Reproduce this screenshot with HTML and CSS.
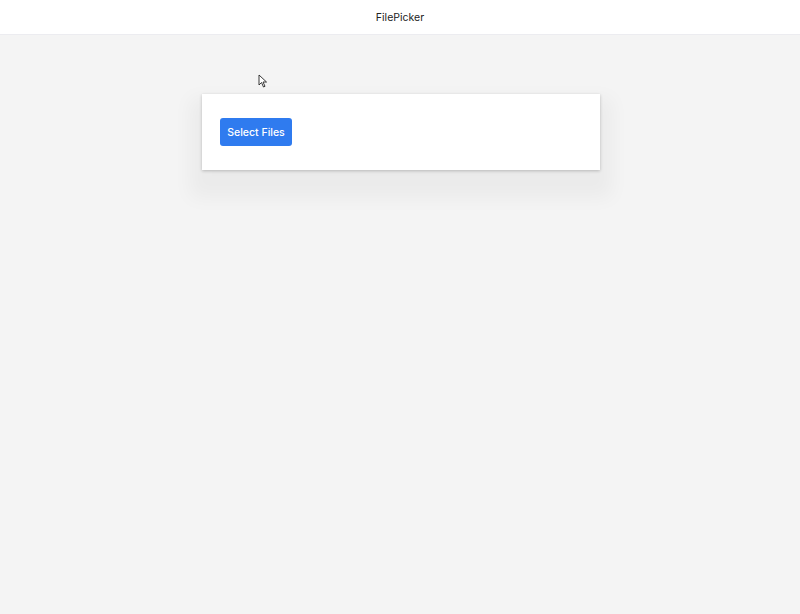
FILE: index.html
```html
<!DOCTYPE html>
<html>
<head>
<meta charset="utf-8">
<link rel="stylesheet" href="styles.css">
</head>
<body>
<header class="topbar">FilePicker</header>
<main class="content">
  <section class="card">
    <button class="btn">Select Files</button>
  </section>
</main>
<svg class="cursor" width="10" height="14" viewBox="0 0 10 14"><path d="M1 1 L1 11 L3.5 8.5 L5.5 13 L7 12.3 L5 8 L8.5 8 Z" fill="#fff" stroke="#222" stroke-width="0.9" stroke-linejoin="round"/></svg>
</body>
</html>
```

FILE: styles.css
```css
html, body {
  margin: 0;
  padding: 0;
  height: 100%;
}
body {
  background: #f4f4f4;
  font-family: "Inter", "Liberation Sans", sans-serif;
  position: relative;
}
.topbar {
  height: 35px;
  background: #fff;
  border-bottom: 1px solid #ececf0;
  display: flex;
  align-items: center;
  justify-content: center;
  font-size: 10.5px;
  color: #222;
  box-sizing: border-box;
}
.content {
  display: flex;
  justify-content: center;
  padding-top: 59px;
}
.card {
  width: 398px;
  height: 76px;
  background: #fff;
  box-sizing: border-box;
  padding: 24px 18px;
  margin-left: 2px;
  box-shadow: 0 1px 3px rgba(0,0,0,0.22), 0 16px 18px 12px rgba(0,0,0,0.04);
}
.btn {
  height: 28px;
  width: 72px;
  padding: 0;
  white-space: nowrap;
  background: #2f7bef;
  color: #fff;
  border: none;
  border-radius: 3px;
  font-family: "Inter", "Liberation Sans", sans-serif;
  font-size: 10.5px;
  font-weight: 500;
  cursor: pointer;
}
.cursor {
  position: absolute;
  left: 258px;
  top: 74px;
}
```
